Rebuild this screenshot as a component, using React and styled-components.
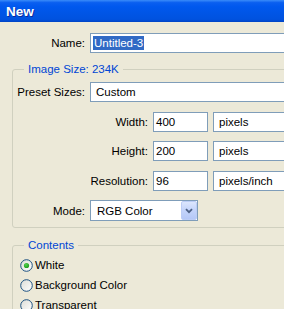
import React from "react";
import styled, { createGlobalStyle } from "styled-components";

const GlobalStyle = createGlobalStyle`
  html, body {
    margin: 0;
    padding: 0;
    background: #ece9d8;
    overflow: hidden;
  }
  body {
    font-family: "Liberation Sans", Arial, sans-serif;
    font-size: 11.5px;
    color: #000;
  }
`;

const Window = styled.div`
  width: 420px;
  height: 309px;
  background: #ece9d8;
`;

const TitleBar = styled.div`
  height: 22px;
  display: flex;
  align-items: center;
  padding-left: 6px;
  background: linear-gradient(
    to bottom,
    #3a8cf9 0%,
    #0a5ff0 12%,
    #0058ee 30%,
    #0055e6 60%,
    #0052df 88%,
    #0043c4 100%
  );
  color: #fff;
  font: bold 13.5px "Liberation Sans", Arial, sans-serif;
  text-shadow: 1px 1px 0 #0b2a9c;
`;

const Content = styled.div`
  display: flex;
  flex-direction: column;
  padding-top: 11px;
`;

const Row = styled.div`
  display: flex;
  align-items: center;
  gap: 5px;
  margin-top: ${(p) => p.$mt || 0}px;
`;

const Label = styled.label`
  flex: none;
  width: ${(p) => p.$w}px;
  text-align: right;
`;

const Field = styled.div`
  box-sizing: border-box;
  height: ${(p) => p.$h || 20}px;
  width: ${(p) => (p.$w ? `${p.$w}px` : "auto")};
  flex: ${(p) => (p.$w ? "none" : "1")};
  display: flex;
  align-items: center;
  padding-left: ${(p) => p.$pad || 2}px;
  border: 1px solid #7f9db9;
  background: #fff;
  white-space: nowrap;
  overflow: hidden;
`;

const Selected = styled.span`
  background: #316ac5;
  color: #fff;
  line-height: 14px;
  padding: 0 1px;
`;

const Value = styled.span`
  flex: 1;
`;

const DropButton = styled.div`
  box-sizing: border-box;
  flex: none;
  width: 16px;
  height: 19px;
  display: flex;
  align-items: center;
  justify-content: center;
  border: 1px solid #bccdf6;
  border-radius: 2px;
  background: linear-gradient(to bottom, #dce6fd 0%, #c5d5fb 45%, #b5c8f7 100%);
`;

const Group = styled.fieldset`
  box-sizing: border-box;
  width: 390px;
  min-width: 0;
  margin: ${(p) => p.$mt}px 0 0 12px;
  padding: 0 0 ${(p) => p.$pb || 0}px 0;
  border: 1px solid #d0d0bf;
  border-radius: 3px;
`;

const Legend = styled.legend`
  margin-left: 11px;
  padding: 0 4px;
  color: #0046d5;
  line-height: 14px;
`;

const RadioRow = styled.div`
  display: flex;
  align-items: center;
  gap: 2px;
  height: 20px;
  padding-left: 7px;
  margin-top: ${(p) => p.$mt || 0}px;
`;

function Radio({ checked }) {
  return (
    <svg width="13" height="13" viewBox="0 0 13 13">
      <defs>
        <linearGradient id="rfill" x1="0" y1="0" x2="1" y2="1">
          <stop offset="0" stopColor="#dcdcd5" />
          <stop offset="1" stopColor="#ffffff" />
        </linearGradient>
        <radialGradient id="rdot" cx="0.4" cy="0.35" r="0.7">
          <stop offset="0" stopColor="#55d14f" />
          <stop offset="1" stopColor="#1a9a18" />
        </radialGradient>
      </defs>
      <circle cx="6.5" cy="6.5" r="5.8" fill="url(#rfill)" stroke="#1c5180" strokeWidth="1" />
      {checked && <circle cx="6.5" cy="6.5" r="2.6" fill="url(#rdot)" />}
    </svg>
  );
}

function Chevron() {
  return (
    <svg width="8" height="6" viewBox="0 0 8 6">
      <path d="M1 1.2 L4 4.2 L7 1.2" fill="none" stroke="#4d6185" strokeWidth="1.8" />
    </svg>
  );
}

const sizeRows = [
  { label: "Width:", value: "400", unit: "pixels" },
  { label: "Height:", value: "200", unit: "pixels" },
  { label: "Resolution:", value: "96", unit: "pixels/inch" },
];

export default function App() {
  return (
    <>
      <GlobalStyle />
      <Window>
        <TitleBar>New</TitleBar>
        <Content>
          <Row>
            <Label $w={85}>Name:</Label>
            <Field $pad={2}>
              <Selected>Untitled-3</Selected>
            </Field>
          </Row>

          <Group $mt={9} $pb={6}>
            <Legend>Image Size: 234K</Legend>
            <Row $mt={6}>
              <Label $w={72}>Preset Sizes:</Label>
              <Field $pad={5}>Custom</Field>
            </Row>
            {sizeRows.map((r) => (
              <Row $mt={9.5} key={r.label}>
                <Label $w={135}>{r.label}</Label>
                <Field $w={55} $pad={2}>{r.value}</Field>
                <Field $pad={5}>{r.unit}</Field>
              </Row>
            ))}
            <Row $mt={9.5}>
              <Label $w={72}>Mode:</Label>
              <Field $w={108} $h={21} $pad={6}>
                <Value>RGB Color</Value>
                <DropButton>
                  <Chevron />
                </DropButton>
              </Field>
            </Row>
          </Group>

          <Group $mt={10}>
            <Legend>Contents</Legend>
            <RadioRow $mt={3}>
              <Radio checked />
              <span>White</span>
            </RadioRow>
            <RadioRow>
              <Radio />
              <span>Background Color</span>
            </RadioRow>
            <RadioRow>
              <Radio />
              <span>Transparent</span>
            </RadioRow>
          </Group>
        </Content>
      </Window>
    </>
  );
}
